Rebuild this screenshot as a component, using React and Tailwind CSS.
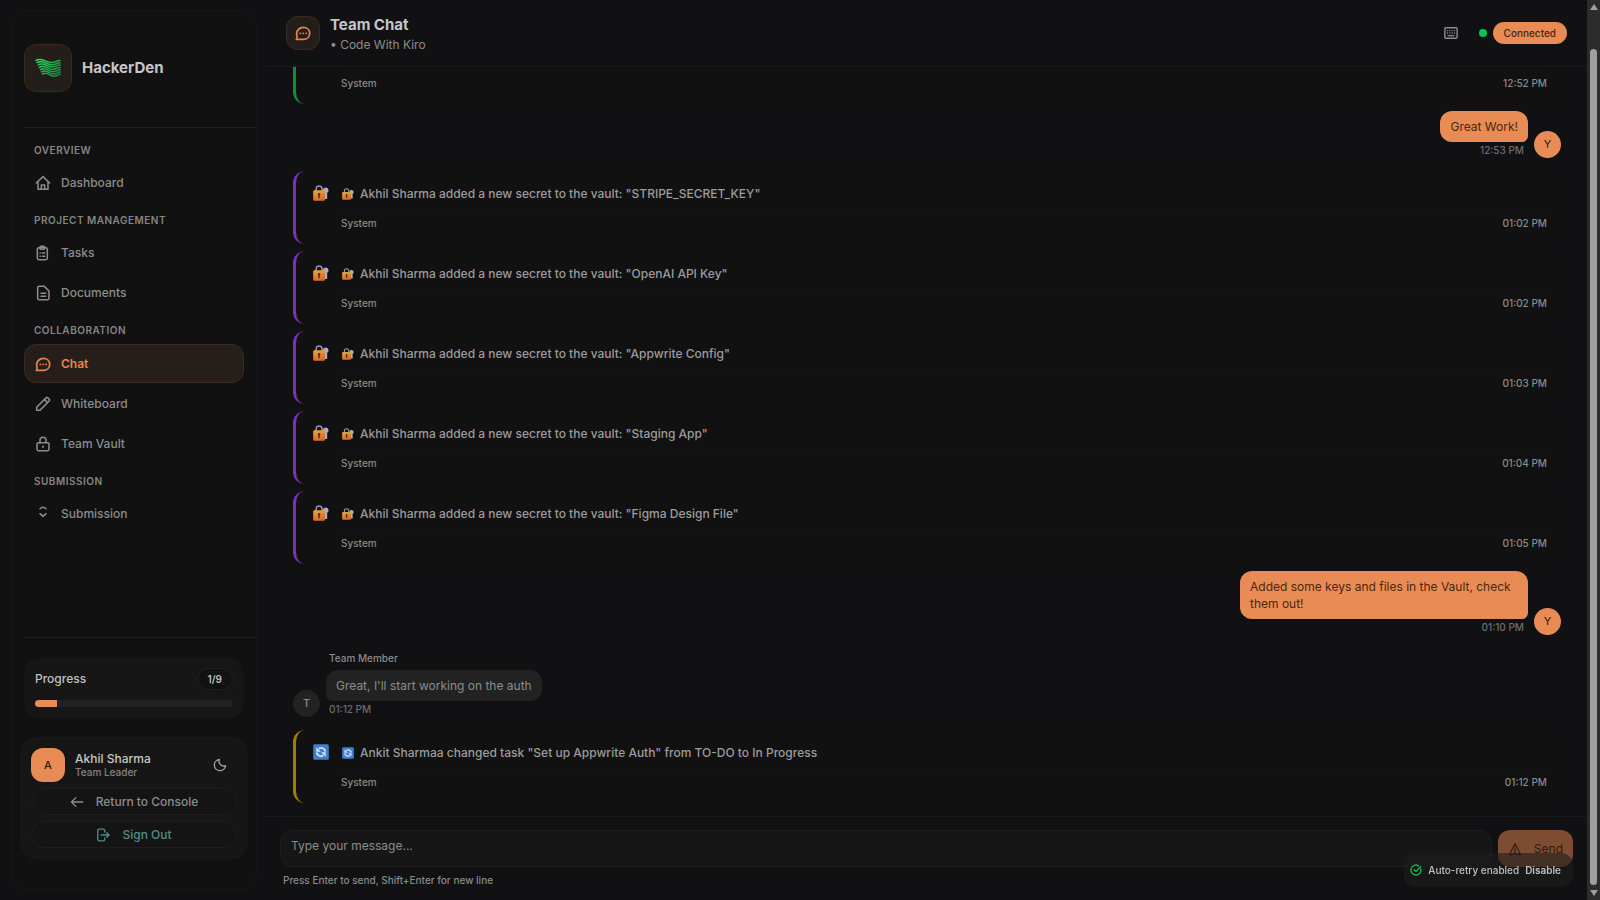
import React from "react";

function Icon({ children, className = "size-4", width = 2.3 }) {
  return (
    <svg
      viewBox="0 0 24 24"
      fill="none"
      stroke="currentColor"
      strokeWidth={width}
      strokeLinecap="round"
      strokeLinejoin="round"
      aria-hidden="true"
      className={`shrink-0 ${className}`}
    >
      {children}
    </svg>
  );
}

const HomeIcon = () => (
  <Icon>
    <path d="M2 12 12 2.500 22 12" />
    <path d="M4.500 10.500V21.500h15V10.500" />
    <path d="M9.500 21v-6h5v6" />
  </Icon>
);
const TasksIcon = () => (
  <Icon>
    <rect x="3.500" y="4" width="15" height="18" rx="2.500" />
    <rect x="7.500" y="2" width="7" height="4.500" rx="1.500" />
    <path d="M7.500 12h.5M11 12h3.500M7.500 17h.5M11 17h3.500" />
  </Icon>
);
const DocumentIcon = () => (
  <Icon>
    <path d="M14 2H6a2 2 0 0 0-2 2v16a2 2 0 0 0 2 2h13a2 2 0 0 0 2-2V9z" />
    <path d="M9 12.500h7M9 17h7" />
  </Icon>
);
const ChatIcon = () => (
  <Icon width={2.6}>
    <path d="M2 21.500c1-1.300 1.300-2.500 1.200-4A8.700 8.700 0 0 1 2.500 13c0-5.300 4.500-9.300 10-9.300s9.500 3.800 9.500 8.900-4 8.900-9.500 8.900z" />
    <path d="M8 12.600h.1M12.300 12.600h.1M16.600 12.600h.1" />
  </Icon>
);
const PencilIcon = () => (
  <Icon>
    <path d="M2.500 21.500v-4.700L16.500 2.800a2 2 0 0 1 2.800 0l1.900 1.900a2 2 0 0 1 0 2.800l-14 14z" />
    <path d="m14.500 5.500 4 4" />
  </Icon>
);
const LockIcon = () => (
  <Icon>
    <rect x="3" y="10" width="18" height="12" rx="2" />
    <path d="M7.500 10V6.500a4.500 4.500 0 0 1 9 0V10" />
    <path d="M12 15.500v1" strokeWidth="2.800" />
  </Icon>
);
const SubmissionIcon = () => (
  <Icon>
    <path d="M7.500 4a6 6 0 0 1 9 0" />
    <path d="m7.500 11.500 4.500 4 4.500-4" />
  </Icon>
);
const MoonIcon = () => (
  <Icon className="size-3.5">
    <path d="M11 2.500A8 8 0 0 0 21.500 13 9.600 9.600 0 1 1 11 2.500z" />
  </Icon>
);
const BackIcon = () => (
  <Icon className="size-3.5">
    <path d="M22 12H2.500M10 4.500 2.500 12l7.500 7.500" />
  </Icon>
);
const SignOutIcon = () => (
  <Icon className="size-3.5">
    <path d="M15 7V4.500A2.500 2.500 0 0 0 12.500 2h-7A2.500 2.500 0 0 0 3 4.500v15A2.500 2.500 0 0 0 5.500 22h7a2.500 2.500 0 0 0 2.500-2.500V17" />
    <path d="M9 12h13.500M18.500 8l4 4-4 4" />
  </Icon>
);
const KeyboardIcon = () => (
  <Icon className="size-3.5" width={2.4}>
    <rect x="1.500" y="3" width="21" height="18" rx="2" />
    <path d="M6 8h.1M10 8h.1M14 8h.1M18 8h.1M6 12h.1M10 12h.1M14 12h.1M18 12h.1M7 16.500h10" />
  </Icon>
);
const WarningIcon = () => (
  <Icon className="size-3.5" width={2}>
    <path d="M12 3 2.500 21.500H7M12 3l9.500 18.500H17M12 10v9M8.500 21.500l3.500-3 3.500 3" />
  </Icon>
);
const CheckIcon = () => (
  <Icon className="size-3" width={2.8}>
    <path d="M21.800 10A10 10 0 1 1 17 3.300" />
    <path d="m8 11 4 4L21.500 5" />
  </Icon>
);

const waves = [0, 1, 2, 3, 4, 5, 6];

function wavePath(n) {
  const x = 1 + n * 1.1;
  const w = 24 - n * 1;
  const y = 2.4 + n * 2.3;
  return `M${x} ${y}C${x + w * 0.15} ${y - 2.2} ${x + w * 0.28} ${y - 0.6} ${x + w * 0.42} ${y + 0.8}S${x + w * 0.7} ${y + 2.6} ${x + w * 0.82} ${y + 1.2} ${x + w * 0.95} ${y} ${x + w} ${y + 0.2}`;
}

function Logo() {
  return (
    <svg viewBox="0 0 26 20" className="h-5 w-[26px]" fill="none" strokeWidth="1.5" strokeLinecap="round" aria-hidden="true">
      <defs>
        <linearGradient id="wave" x1="0" y1="0" x2="22" y2="20" gradientUnits="userSpaceOnUse">
          <stop offset="0" stopColor="#33e066" />
          <stop offset="1" stopColor="#17853c" />
        </linearGradient>
      </defs>
      <g stroke="url(#wave)">
        {waves.map((n) => (
          <path key={n} d={wavePath(n)} />
        ))}
      </g>
    </svg>
  );
}

function LockKeyEmoji({ className }) {
  return (
    <svg viewBox="0 0 16 16" className={`shrink-0 ${className}`} aria-hidden="true">
      <defs>
        <linearGradient id="lock" x1="0" y1="5" x2="3" y2="16" gradientUnits="userSpaceOnUse">
          <stop offset="0" stopColor="#e3b038" />
          <stop offset="1" stopColor="#d8692c" />
        </linearGradient>
      </defs>
      <path d="M3.200 6V3.900a2.900 2.900 0 0 1 5.800 0V6" fill="none" stroke="#9a93ae" strokeWidth="1.500" />
      <path d="M12.800 2.600a2.800 2.800 0 0 1 1.400 5.200V14h-3V7.800a2.800 2.800 0 0 1 1.600-5.200z" fill="#b3a9c4" />
      <rect x=".2" y="5.200" width="11.800" height="10.600" rx="1.400" fill="url(#lock)" />
      <path d="M6.100 8a1.400 1.400 0 0 1 .8 2.500V13H5.300v-2.500A1.400 1.400 0 0 1 6.100 8z" fill="#4a3038" />
    </svg>
  );
}

function SyncEmoji({ className }) {
  return (
    <svg viewBox="0 0 16 16" className={`shrink-0 ${className}`} aria-hidden="true">
      <rect x=".2" y=".2" width="15.600" height="15.600" rx="1.500" fill="#3f7fd0" />
      <g fill="none" stroke="#dbe1ef" strokeWidth="1.900">
        <path d="M12.300 7.500A4.200 4.200 0 0 0 5.800 4.600" />
        <path d="M3.700 8.500a4.200 4.200 0 0 0 6.500 2.900" />
      </g>
      <path d="M3.300 3.200v4.600h4.600zM12.700 12.800V8.200H8.100z" fill="#dbe1ef" />
    </svg>
  );
}

const sections = [
  { title: "Overview", items: [["Dashboard", HomeIcon]] },
  { title: "Project Management", items: [["Tasks", TasksIcon], ["Documents", DocumentIcon]] },
  { title: "Collaboration", items: [["Chat", ChatIcon], ["Whiteboard", PencilIcon], ["Team Vault", LockIcon]] },
  { title: "Submission", items: [["Submission", SubmissionIcon]] },
];

function Sidebar() {
  return (
    <aside className="my-2.5 ml-[11px] flex w-[246px] shrink-0 flex-col rounded-2xl border border-[#171719] bg-[#111111]">
      <div className="ml-3 flex h-[117px] shrink-0 items-center gap-2.5 border-b border-[#1f1f1f] pb-0.5">
        <span className="flex size-12 items-center justify-center rounded-xl border border-[#40291c] bg-[#241e1a]">
          <Logo />
        </span>
        <span className="text-[15px] font-bold text-[#c6c6c6]">HackerDen</span>
      </div>
      <nav className="flex flex-1 flex-col px-3 pt-1">
        {sections.map((section) => (
          <section key={section.title} className="flex flex-col gap-0.5">
            <h2 className="mt-2 mb-0.5 pl-2.5 text-[10px] leading-5 font-semibold tracking-wider text-[#858585] uppercase">
              {section.title}
            </h2>
            {section.items.map(([label, ItemIcon]) => (
              <a
                key={label}
                href="#"
                className={
                  label === "Chat"
                    ? "flex h-[39px] items-center gap-2.5 rounded-xl border border-[#40291c] bg-[#261e1a] px-2.5 text-xs font-semibold text-[#e8834a]"
                    : "flex h-[38px] items-center gap-2.5 rounded-xl border border-transparent px-2.5 text-xs font-medium text-[#8c8c8c]"
                }
              >
                <ItemIcon />
                {label}
              </a>
            ))}
          </section>
        ))}
      </nav>
      <div className="ml-3 border-t border-[#1f1f1f] pt-5 pr-3">
        <div className="rounded-2xl bg-[#161616] px-[11px] pt-2.5 pb-3">
          <div className="flex items-center justify-between">
            <span className="text-xs leading-5 font-medium text-[#c0c0c0]">Progress</span>
            <span className="rounded-full border border-[#1f1f1f] bg-[#121212] px-2.5 text-[10px] leading-5 font-semibold text-[#c0c0c0]">1/9</span>
          </div>
          <div className="mt-2.5 h-[7px] overflow-hidden rounded-full bg-[#222222]">
            <div className="h-full w-1/9 bg-[#e88b54]" />
          </div>
        </div>
      </div>
      <div className="mx-2 mt-[18px] mb-[30px] rounded-2xl border border-[#181818] bg-[#161616] p-2.5">
        <div className="flex items-center gap-2.5">
          <span className="flex size-[34px] items-center justify-center rounded-xl bg-[#e88b54] text-[11px] font-medium text-[#2a1a10]">A</span>
          <div className="flex-1">
            <p className="text-xs leading-[14px] font-medium text-[#c6c6c6]">Akhil Sharma</p>
            <p className="text-[10px] leading-[13px] font-medium text-[#858585]">Team Leader</p>
          </div>
          <button type="button" aria-label="Toggle theme" className="mr-2.5 text-[#a0a0a0]">
            <MoonIcon />
          </button>
        </div>
        <button type="button" className="mt-1.5 flex h-[27px] w-full items-center justify-center gap-3 rounded-full border border-[#1d1d1d] bg-[#141414] text-xs font-medium text-[#8c8c8c]">
          <BackIcon />
          Return to Console
        </button>
        <button type="button" className="mt-1.5 flex h-[27px] w-full items-center justify-center gap-3 rounded-full border border-[#1d1d1d] bg-[#141414] text-xs font-medium text-[#4f8f87]">
          <SignOutIcon />
          Sign Out
        </button>
      </div>
    </aside>
  );
}

function SystemMessage({ emoji: Emoji, accent, text, time }) {
  return (
    <article className={`flex shrink-0 gap-3 rounded-xl border-l-[3px] bg-[#111111] pt-3 pr-3.5 pb-[13px] pl-[17px] ${accent}`}>
      <Emoji className="mt-0.5 size-4" />
      <div className="flex-1">
        <p className="flex items-center gap-1.5 text-xs leading-[22px] font-medium text-[#9c9c9c]">
          <Emoji className="my-[5px] ml-px size-3" />
          {text}
        </p>
        <div className="mt-[5px] flex justify-between border-t border-[#151515] pt-1 text-[10px] leading-4 font-medium text-[#8a8a8a]">
          <span>System</span>
          <time>{time}</time>
        </div>
      </div>
    </article>
  );
}

function OwnMessage({ text, time }) {
  return (
    <article className="mb-1.5 flex shrink-0 items-end justify-end gap-1.5">
      <div className="flex flex-col items-end">
        <p className="max-w-[288px] rounded-xl rounded-br-md bg-[#e88b54] px-2.5 py-[7px] text-xs leading-[17px] text-[#4a2812]">{text}</p>
        <time className="mr-1 text-[10px] leading-4 font-medium text-[#6d6d6d]">{time}</time>
      </div>
      <span className="flex size-[27px] items-center justify-center rounded-full bg-[#e88b54] text-[11px] text-[#2a1a10]">Y</span>
    </article>
  );
}

const secrets = [
  ["STRIPE_SECRET_KEY", "01:02 PM"],
  ["OpenAI API Key", "01:02 PM"],
  ["Appwrite Config", "01:03 PM"],
  ["Staging App", "01:04 PM"],
  ["Figma Design File", "01:05 PM"],
];

function Chat() {
  return (
    <main className="ml-[9px] flex min-w-0 flex-1 flex-col">
      <header className="flex h-[67px] shrink-0 items-center gap-2.5 border-b border-[#1b1b1d] px-5">
        <span className="flex size-[34px] items-center justify-center rounded-xl border border-[#40291c] bg-[#241e1a] text-[#e8834a]">
          <ChatIcon />
        </span>
        <div className="flex-1 pt-1">
          <h1 className="text-[15px] leading-5 font-bold text-[#c6c6c6]">Team Chat</h1>
          <p className="text-xs leading-5 text-[#8c8c8c]">• Code With Kiro</p>
        </div>
        <button type="button" aria-label="Keyboard shortcuts" className="mr-[11px] text-[#8c8c8c]">
          <KeyboardIcon />
        </button>
        <div className="flex items-center gap-1.5">
          <span className="size-2 rounded-full bg-[#00c853]" />
          <span className="rounded-full bg-[#e88b54] px-[11px] text-[10px] leading-[22px] font-medium text-[#4a2812]">Connected</span>
        </div>
      </header>

      <div className="flex min-h-0 flex-1 flex-col justify-end gap-[7px] overflow-hidden pr-[26px] pb-[13px] pl-[27px]">
        <SystemMessage emoji={LockKeyEmoji} accent="border-[#0b8f3c]" time="12:52 PM" />
        <OwnMessage text="Great Work!" time="12:53 PM" />
        {secrets.map(([name, time]) => (
          <SystemMessage
            key={name}
            emoji={LockKeyEmoji}
            accent="border-[#7a32b4]"
            text={`Akhil Sharma added a new secret to the vault: "${name}"`}
            time={time}
          />
        ))}
        <OwnMessage text="Added some keys and files in the Vault, check them out!" time="01:10 PM" />
        <article className="mt-0.5 mb-1.5 flex shrink-0 items-end gap-1.5">
          <span className="flex size-[27px] items-center justify-center rounded-full bg-[#222222] text-[11px] font-medium text-[#8c8c8c]">T</span>
          <div className="flex flex-col items-start">
            <span className="mb-1 ml-[3px] text-[10px] leading-4 font-medium text-[#8a8a8a]">Team Member</span>
            <p className="rounded-xl rounded-bl-md bg-[#222222] px-2.5 py-[7px] text-xs leading-[17px] text-[#8c8c8c]">Great, I'll start working on the auth</p>
            <time className="ml-[3px] text-[10px] leading-4 font-medium text-[#6d6d6d]">01:12 PM</time>
          </div>
        </article>
        <SystemMessage
          emoji={SyncEmoji}
          accent="border-[#a87a08]"
          text={'Ankit Sharmaa changed task "Set up Appwrite Auth" from TO-DO to In Progress'}
          time="01:12 PM"
        />
      </div>

      <form className="shrink-0 border-t border-[#1b1b1d] px-3.5 pt-[13px] pb-3" onSubmit={(event) => event.preventDefault()}>
        <div className="flex gap-1.5">
          <input
            type="text"
            aria-label="Message"
            placeholder="Type your message..."
            className="h-[37px] min-w-0 flex-1 rounded-xl border border-[#1d1d1d] bg-[#161616] px-2.5 pb-1.5 text-xs text-[#c6c6c6] placeholder:text-[#8c8c8c]"
          />
          <button type="submit" className="flex h-[37px] items-center gap-3 rounded-xl bg-[#7e4c31] px-2.5 text-xs text-[#2b1c13]">
            <WarningIcon />
            Send
          </button>
        </div>
        <p className="mt-[5px] ml-[3px] text-[10px] leading-4 font-medium text-[#8a8a8a]">Press Enter to send, Shift+Enter for new line</p>
      </form>
    </main>
  );
}

function PageScrollbar() {
  return (
    <div className="flex w-[13px] shrink-0 flex-col items-center bg-[#2c2c2c]" aria-hidden="true">
      <svg viewBox="0 0 8 6" className="mt-1 h-1.5 w-2" fill="#9f9f9f">
        <path d="M4 0 8 6H0z" />
      </svg>
      <div className="mt-[39px] w-[7px] flex-1 rounded-full bg-[#9f9f9f]" />
      <svg viewBox="0 0 8 6" className="mt-[5px] mb-1 h-1.5 w-2" fill="#9f9f9f">
        <path d="M4 6 0 0h8z" />
      </svg>
    </div>
  );
}

export default function App() {
  return (
    <div className="flex h-screen overflow-hidden bg-[#111113] font-['Inter',sans-serif]">
      <Sidebar />
      <Chat />
      <PageScrollbar />
      <div className="fixed right-[27px] bottom-[13px] flex h-[34px] items-center gap-1.5 rounded-xl bg-[#1e1e1e]/60 pr-3 pl-1.5 text-[10px] font-medium text-[#c0c0c0]">
        <span className="text-[#16b544]">
          <CheckIcon />
        </span>
        <span>Auto-retry enabled</span>
        <button type="button" className="font-semibold">Disable</button>
      </div>
    </div>
  );
}
